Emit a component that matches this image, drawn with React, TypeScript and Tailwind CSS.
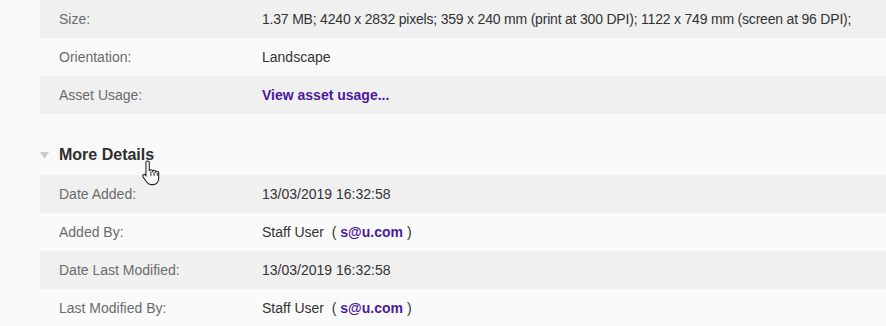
import React from "react";

const Row = ({ label, children, grey }: { label: string; children: React.ReactNode; grey: boolean }) => (
  <div className={`flex h-[38px] items-center ${grey ? "bg-[#f0f0f0]" : "bg-[#fafafa]"}`}>
    <div className="w-[222px] shrink-0 pl-[19px] text-[#6b6b6b]">{label}</div>
    <div className="text-[#333333] whitespace-nowrap">{children}</div>
  </div>
);

const Link = ({ children }: { children: React.ReactNode }) => (
  <span className="font-bold text-[#4b1a9c]">{children}</span>
);

export default function App() {
  return (
    <div
      className="relative h-[326px] w-[886px] overflow-hidden bg-[#f9f9f9] text-[14px] leading-none"
      style={{ fontFamily: '"Liberation Sans", Arial, sans-serif' }}
    >
      <div className="pl-[40px]">
        <Row label="Size:" grey>
          <span className="tracking-[-0.2px]">
            1.37 MB; 4240 x 2832 pixels; 359 x 240 mm (print at 300 DPI); 1122 x 749 mm (screen at 96 DPI);
          </span>
        </Row>
        <Row label="Orientation:" grey={false}>Landscape</Row>
        <Row label="Asset Usage:" grey>
          <Link>View asset usage...</Link>
        </Row>
        <div className="flex h-[61px] items-end pb-[12px]">
          <span className="flex w-[19px] pb-[4px]">
            <svg width="9" height="7" viewBox="0 0 9 7">
              <path d="M0 0h9L4.5 7z" fill="#cccccc" />
            </svg>
          </span>
          <span className="text-[16px] font-semibold text-[#2e2e2e]">More Details</span>
        </div>
        <Row label="Date Added:" grey>13/03/2019 16:32:58</Row>
        <Row label="Added By:" grey={false}>
          Staff User&nbsp; ( <Link>s@u.com</Link> )
        </Row>
        <Row label="Date Last Modified:" grey>13/03/2019 16:32:58</Row>
        <Row label="Last Modified By:" grey={false}>
          Staff User&nbsp; ( <Link>s@u.com</Link> )
        </Row>
      </div>
      <svg className="absolute left-[141px] top-[159px]" width="22" height="27" viewBox="0 0 20 24">
        <path
          d="M6 1.5c.9 0 1.5.6 1.5 1.5v7.5c.3-.6.8-1 1.5-1 .8 0 1.4.6 1.5 1.3.3-.5.8-.8 1.4-.8.8 0 1.4.6 1.5 1.4.3-.4.7-.6 1.2-.6.9 0 1.5.7 1.5 1.5v5.2c0 3-2.2 5.5-5.3 5.5H9.3c-1.6 0-3-.8-3.9-2.1L1.8 16c-.5-.7-.3-1.6.4-2 .6-.4 1.4-.3 1.9.3l.4.5V3c0-.9.6-1.5 1.5-1.5z"
          fill="#fff"
          stroke="#222"
          strokeWidth="1"
        />
        <path d="M9 11v4M11.9 11.5v3.5M14.8 12.3v2.7" stroke="#222" strokeWidth="0.9" />
      </svg>
    </div>
  );
}
